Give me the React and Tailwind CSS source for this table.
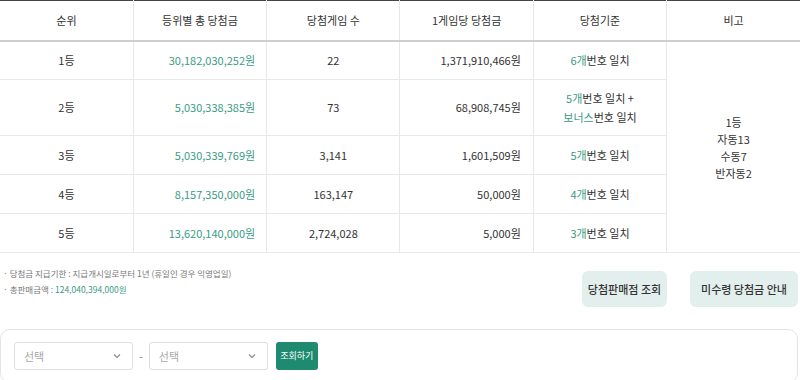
import React from 'react';

const rows = [
  { rank: '1등', total: '30,182,030,252원', games: '22', per: '1,371,910,466원', crit: [['6개', '번호 일치']] },
  { rank: '2등', total: '5,030,338,385원', games: '73', per: '68,908,745원', crit: [['5개', '번호 일치 +'], ['보너스', '번호 일치']] },
  { rank: '3등', total: '5,030,339,769원', games: '3,141', per: '1,601,509원', crit: [['5개', '번호 일치']] },
  { rank: '4등', total: '8,157,350,000원', games: '163,147', per: '50,000원', crit: [['4개', '번호 일치']] },
  { rank: '5등', total: '13,620,140,000원', games: '2,724,028', per: '5,000원', crit: [['3개', '번호 일치']] },
];

const heads = ['순위', '등위별 총 당첨금', '당첨게임 수', '1게임당 당첨금', '당첨기준', '비고'];

function Chevron() {
  return (
    <svg width="10" height="10" viewBox="0 0 10 10" fill="none" stroke="#888" strokeWidth="1.1">
      <path d="M2 3.5 L5 6.5 L8 3.5" />
    </svg>
  );
}

function Select() {
  return (
    <div className="flex h-[28px] w-[119px] items-center justify-between rounded-[3px] border border-[#dedede] bg-white pl-[9px] pr-[10px] text-[11px] text-[#a8a8a8]">
      <span>선택</span>
      <Chevron />
    </div>
  );
}

function App() {
  return (
    <div className="h-[380px] w-[800px] overflow-hidden bg-white text-[#333]" style={{ fontFamily: '"Noto Sans CJK KR", "Noto Sans", sans-serif' }}>
      <table className="w-[800px] table-fixed border-collapse text-[11px]">
        <thead>
          <tr className="h-[40px] border-t border-t-[#444] border-b-2 border-b-[#cfcfcf]">
            {heads.map((h, i) => (
              <th key={h} className={`font-normal text-[#333] ${i < 5 ? 'border-r border-r-[#e8e8e8]' : ''}`}>{h}</th>
            ))}
          </tr>
        </thead>
        <tbody>
          {rows.map((r, i) => (
            <tr key={r.rank} className={`${i === 1 ? 'h-[56px]' : 'h-[39px]'} border-b border-b-[#e8e8e8]`}>
              <td className="border-r border-r-[#e8e8e8] text-center">{r.rank}</td>
              <td className="border-r border-r-[#e8e8e8] pr-[11px] text-right text-[#3a9b84]">{r.total}</td>
              <td className="border-r border-r-[#e8e8e8] text-center">{r.games}</td>
              <td className="border-r border-r-[#e8e8e8] pr-[12px] text-right">{r.per}</td>
              <td className="border-r border-r-[#e8e8e8] text-center leading-[19px]">
                {r.crit.map(([g, t]) => (
                  <div key={g + t}><span className="text-[#3a9b84]">{g}</span>{t}</div>
                ))}
              </td>
              {i === 0 && (
                <td rowSpan={5} className="text-center leading-[17px]">
                  <div className="pt-[3px]">1등</div>
                  <div>자동13</div>
                  <div>수동7</div>
                  <div>반자동2</div>
                </td>
              )}
            </tr>
          ))}
        </tbody>
      </table>

      <div className="mt-[12px] flex items-start justify-between">
        <div className="pl-[3px] text-[8.5px] leading-[16px] text-[#777]">
          <div>· 당첨금 지급기한 : 지급개시일로부터 1년 (휴일인 경우 익영업일)</div>
          <div>· 총판매금액 : <span className="text-[#3a9b84]">124,040,394,000원</span></div>
        </div>
        <div className="mt-[6px] flex gap-[23px] pr-[2px]">
          <button className="h-[36px] w-[85px] rounded-[6px] bg-[#e3efed] text-[11px] font-medium text-[#333]">당첨판매점 조회</button>
          <button className="h-[36px] w-[108px] rounded-[6px] bg-[#e3efed] text-[11px] font-medium text-[#333]">미수령 당첨금 안내</button>
        </div>
      </div>

      <div className="mt-[22px] flex h-[54px] w-[798px] items-center gap-[5px] rounded-[10px] border border-[#e4e4e4] pl-[13px]">
        <Select />
        <span className="px-[1px] text-[11px] text-[#888]">-</span>
        <Select />
        <button className="ml-[3px] h-[28px] w-[42px] rounded-[3px] bg-[#1e8a70] text-[9px] text-white">조회하기</button>
      </div>
    </div>
  );
}

export default App;
